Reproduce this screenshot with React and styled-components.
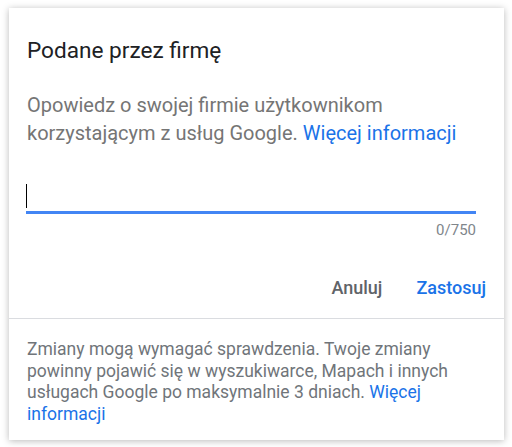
import React from 'react';
import styled, { createGlobalStyle } from 'styled-components';

const GlobalStyle = createGlobalStyle`
    html, body {
        margin: 0;
        padding: 0;
        background: #ffffff;
        font-family: Roboto, "Noto Sans", Arial, sans-serif;
    }
`

export default function App() {
    return (
        <Page>
            <GlobalStyle />
            <Card>
                <Body>
                    <Title>Podane przez firmę</Title>
                    <Description>
                        Opowiedz o swojej firmie użytkownikom korzystającym z usług Google.{' '}
                        <Link href="#">Więcej informacji</Link>
                    </Description>
                    <Field>
                        <Caret />
                    </Field>
                    <Counter>0/750</Counter>
                    <Actions>
                        <Button>Anuluj</Button>
                        <Button primary>Zastosuj</Button>
                    </Actions>
                </Body>
                <Footer>
                    Zmiany mogą wymagać sprawdzenia. Twoje zmiany powinny pojawić się w wyszukiwarce, Mapach i innych usługach Google po maksymalnie 3 dniach.{' '}
                    <Link href="#">Więcej informacji</Link>
                </Footer>
            </Card>
        </Page>
    )
}

const Page = styled.div`
    padding: 8px 8px 7px 9px;
`

const Card = styled.div`
    width: 495px;
    height: 432px;
    box-sizing: border-box;
    background: #ffffff;
    box-shadow: 0 1px 7px rgba(0, 0, 0, 0.28);
    display: flex;
    flex-direction: column;
`

const Body = styled.div`
    padding: 29px 18px 12px 18px;
    border-bottom: 1px solid #dadce0;
`

const Title = styled.div`
    font-size: 22.6px;
    line-height: 28px;
    color: #202124;
`

const Description = styled.div`
    margin-top: 26px;
    max-width: 450px;
    font-size: 20px;
    line-height: 28px;
    color: #757575;
`

const Link = styled.a`
    color: #1a73e8;
    text-decoration: none;
`

const Field = styled.div`
    margin-top: 32px;
    margin-right: 10px;
    margin-left: -1px;
    padding: 5px 0 3px 0;
    border-bottom: 3px solid #4285f4;
    height: 24px;
`

const Caret = styled.span`
    display: block;
    width: 1px;
    height: 24px;
    background: #000000;
`

const Counter = styled.div`
    margin-top: 6px;
    margin-right: 10px;
    text-align: right;
    font-size: 15px;
    line-height: 20px;
    color: #80868b;
`

const Actions = styled.div`
    margin-top: 30px;
    display: flex;
    justify-content: flex-end;
    gap: 34px;
`

const Button = styled.button`
    border: none;
    background: none;
    padding: 8px 0;
    margin: 0;
    font-family: Roboto, "Noto Sans", Arial, sans-serif;
    font-size: 18px;
    line-height: 20px;
    font-weight: 500;
    color: ${props => props.primary ? '#1a73e8' : '#5f6368'};
    cursor: pointer;
`

const Footer = styled.div`
    padding: 20px 28px 12px 18px;
    font-size: 17.5px;
    line-height: 21.5px;
    color: #70757a;
`
